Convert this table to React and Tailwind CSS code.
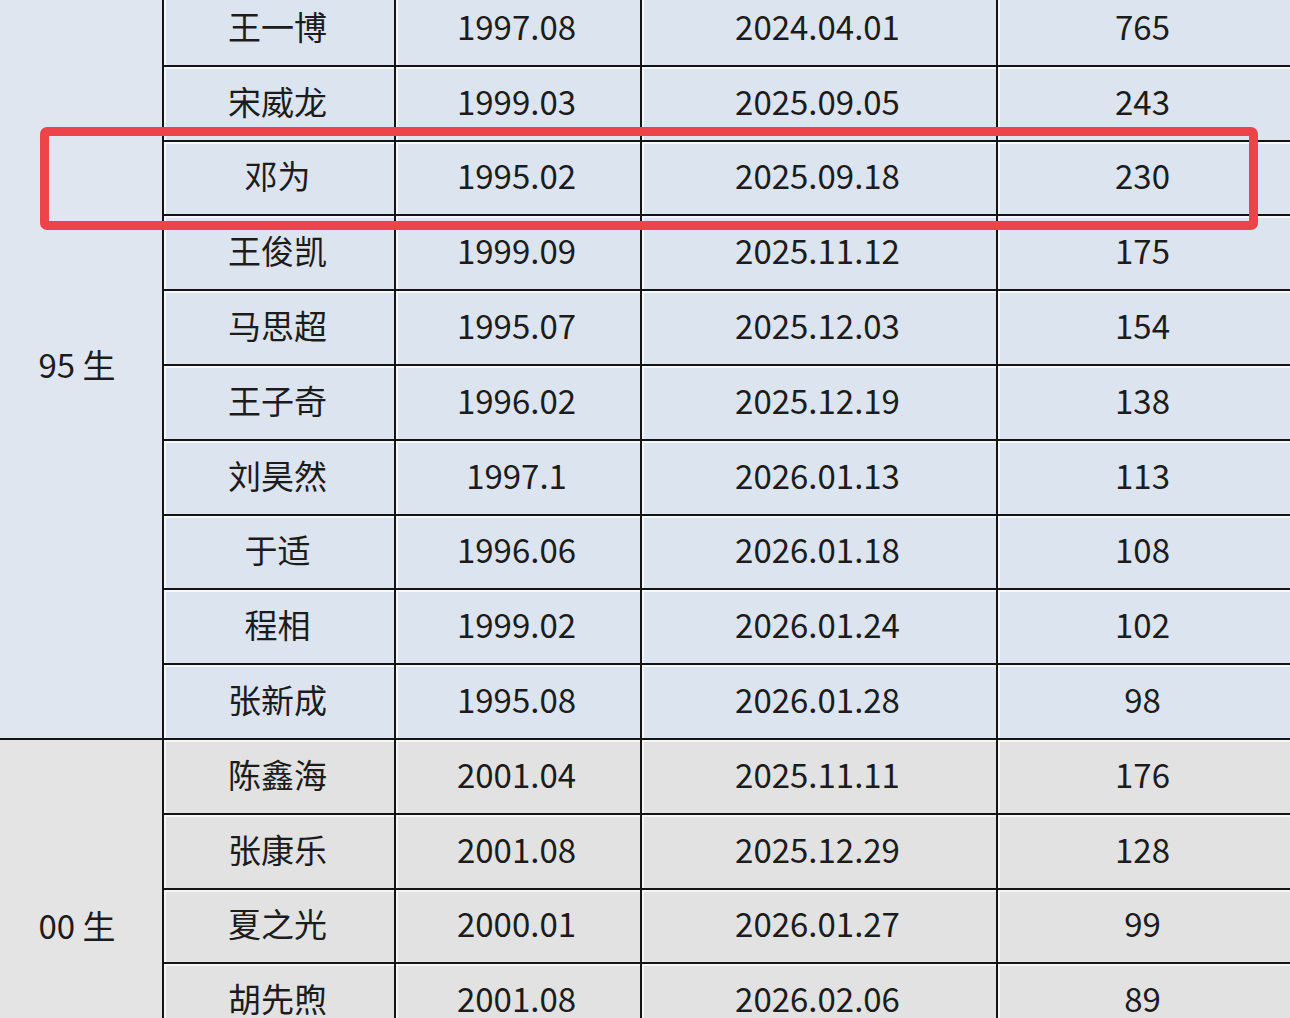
const GROUPS = [
  {
    label: "95 生",
    cell: "bg-[#dce4ef]",
    side: "row-span-10 bg-[#dfe6f0]",
    rows: [
      ["王一博", "1997.08", "2024.04.01", "765"],
      ["宋威龙", "1999.03", "2025.09.05", "243"],
      ["邓为", "1995.02", "2025.09.18", "230"],
      ["王俊凯", "1999.09", "2025.11.12", "175"],
      ["马思超", "1995.07", "2025.12.03", "154"],
      ["王子奇", "1996.02", "2025.12.19", "138"],
      ["刘昊然", "1997.1", "2026.01.13", "113"],
      ["于适", "1996.06", "2026.01.18", "108"],
      ["程相", "1999.02", "2026.01.24", "102"],
      ["张新成", "1995.08", "2026.01.28", "98"],
    ],
  },
  {
    label: "00 生",
    cell: "bg-[#e2e2e2]",
    side: "row-span-5 bg-[#e4e4e4]",
    rows: [
      ["陈鑫海", "2001.04", "2025.11.11", "176"],
      ["张康乐", "2001.08", "2025.12.29", "128"],
      ["夏之光", "2000.01", "2026.01.27", "99"],
      ["胡先煦", "2001.08", "2026.02.06", "89"],
      ["", "", "", ""],
    ],
  },
];

export default function App() {
  return (
    <div className="relative h-[1018px] w-[1290px] overflow-hidden bg-[#dce4ef] font-['Noto_Sans_CJK_SC','Noto_Sans',sans-serif] text-[#1c1c1c]">
      <div className="-mt-[8px] grid grid-cols-[162px_230px_244px_354px_292px] auto-rows-[72.8px] gap-[2px] bg-[#141414]">
        {GROUPS.map((g) => [
          <div
            key={g.label}
            className={`${g.side} col-start-1 flex items-center justify-center pr-[8px] text-[33px]`}
          >
            {g.label}
          </div>,
          ...g.rows.map((r, i) =>
            r.map((c, j) => (
              <div
                key={g.label + i + "-" + j}
                className={`${g.cell} flex items-center justify-center border-t-2 border-l-2 border-white/70 pr-[5px] pb-[6px] text-[33px] leading-none`}
              >
                {c}
              </div>
            ))
          ),
        ])}
      </div>
      {/* red highlight frame around 邓为 */}
      <div className="absolute left-[40px] top-[127px] h-[103px] w-[1218px] rounded-[7px] border-[9px] border-[#ec4448]" />
    </div>
  );
}
